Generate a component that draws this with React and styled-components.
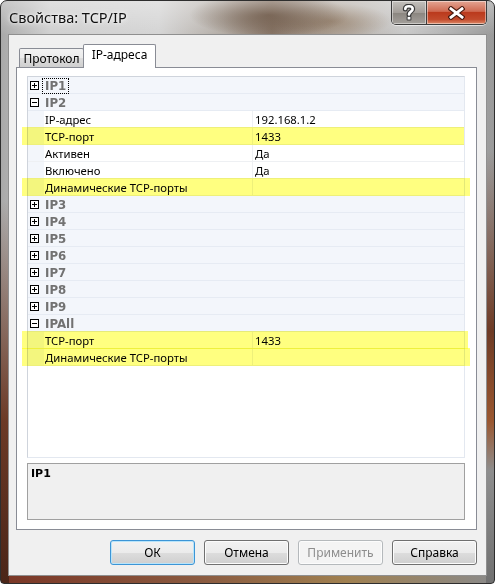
import React from "react";
import styled, { createGlobalStyle } from "styled-components";

const GlobalStyle = createGlobalStyle`
  html, body {
    margin: 0;
    padding: 0;
    background: #ffffff;
  }
  body {
    width: 495px;
    height: 584px;
    overflow: hidden;
    font-family: "Noto Sans", "DejaVu Sans", sans-serif;
  }
`;

const rows = [
  { kind: "cat", label: "IP1", open: false, focus: true },
  { kind: "cat", label: "IP2", open: true },
  { kind: "prop", name: "IP-адрес", value: "192.168.1.2" },
  { kind: "prop", name: "TCP-порт", value: "1433", mark: 0 },
  { kind: "prop", name: "Активен", value: "Да" },
  { kind: "prop", name: "Включено", value: "Да" },
  { kind: "prop", name: "Динамические TCP-порты", value: "", mark: 6 },
  { kind: "cat", label: "IP3" },
  { kind: "cat", label: "IP4" },
  { kind: "cat", label: "IP5" },
  { kind: "cat", label: "IP6" },
  { kind: "cat", label: "IP7" },
  { kind: "cat", label: "IP8" },
  { kind: "cat", label: "IP9" },
  { kind: "cat", label: "IPAll", open: true },
  { kind: "prop", name: "TCP-порт", value: "1433", mark: 4 },
  { kind: "prop", name: "Динамические TCP-порты", value: "", mark: 6 },
];

function Expander({ open }) {
  return (
    <svg width="9" height="9" viewBox="0 0 9 9">
      <rect x="0.5" y="0.5" width="8" height="8" fill="#ffffff" stroke="#000000" />
      <line x1="2" y1="4.5" x2="7" y2="4.5" stroke="#000000" />
      {!open && <line x1="4.5" y1="2" x2="4.5" y2="7" stroke="#000000" />}
    </svg>
  );
}

function HelpGlyph() {
  return (
    <svg width="14" height="17" viewBox="0 0 14 17">
      <g fill="none" strokeLinecap="round" strokeLinejoin="round">
        <path d="M3.3 5 C3.3 1.3 10.7 1.3 10.7 5 C10.7 7.6 7 7.6 7 10.4" stroke="#3a3a3a" strokeWidth="5" />
        <path d="M3.3 5 C3.3 1.3 10.7 1.3 10.7 5 C10.7 7.6 7 7.6 7 10.4" stroke="#ffffff" strokeWidth="2.6" />
      </g>
      <rect x="4.6" y="12" width="4.8" height="4.4" rx="1" fill="#3a3a3a" />
      <rect x="5.6" y="12.9" width="2.8" height="2.6" fill="#ffffff" />
    </svg>
  );
}

function CloseGlyph() {
  return (
    <svg width="17" height="14" viewBox="0 0 17 14">
      <g strokeLinecap="square">
        <path d="M3 2.8 L14 11.2 M14 2.8 L3 11.2" stroke="#4a1a10" strokeWidth="5" />
        <path d="M3 2.8 L14 11.2 M14 2.8 L3 11.2" stroke="#ffffff" strokeWidth="2.8" />
      </g>
    </svg>
  );
}

function PropertyRow({ row }) {
  if (row.kind === "cat") {
    return (
      <Row $category>
        <Margin>
          <Expander open={row.open} />
        </Margin>
        <CategoryLabel $focus={row.focus}>{row.label}</CategoryLabel>
      </Row>
    );
  }
  return (
    <Row>
      <Margin />
      <NameCell>{row.name}</NameCell>
      <ValueCell>{row.value}</ValueCell>
      {row.mark !== undefined && <Marker $reach={row.mark} />}
    </Row>
  );
}

export default function App() {
  return (
    <>
      <GlobalStyle />
      <Window>
        <TitleBar>
          <Title>Свойства: TCP/IP</Title>
          <Caption>
            <HelpButton>
              <HelpGlyph />
            </HelpButton>
            <CloseButton>
              <CloseGlyph />
            </CloseButton>
          </Caption>
        </TitleBar>
        <Client>
          <TabStrip>
            <Tab>Протокол</Tab>
            <Tab $active>IP-адреса</Tab>
          </TabStrip>
          <TabPanel>
            <Grid>
              {rows.map((row, i) => (
                <PropertyRow key={i} row={row} />
              ))}
            </Grid>
            <Description>
              <strong>IP1</strong>
            </Description>
          </TabPanel>
          <ButtonRow>
            <Button $primary>ОК</Button>
            <Button>Отмена</Button>
            <Button disabled>Применить</Button>
            <Button>Справка</Button>
          </ButtonRow>
        </Client>
      </Window>
    </>
  );
}

const Window = styled.div`
  width: 495px;
  height: 584px;
  box-sizing: border-box;
  display: flex;
  flex-direction: column;
  padding: 0 7px 7px;
  border: 1px solid #2e2e2e;
  border-radius: 7px 7px 4px 4px;
  overflow: hidden;
  background:
    linear-gradient(to bottom, rgba(255, 255, 255, 0.35), rgba(255, 255, 255, 0) 34px),
    radial-gradient(ellipse 80px 22px at 268px 14px, rgba(80, 55, 35, 0.85), rgba(80, 55, 35, 0) 100%),
    radial-gradient(ellipse 60px 18px at 330px 20px, rgba(120, 90, 60, 0.6), rgba(120, 90, 60, 0) 100%),
    linear-gradient(to bottom, rgba(0, 0, 0, 0) 200px, #6c3a26 420px, #4a2518 584px) left top / 8px 100% no-repeat,
    linear-gradient(to bottom, rgba(0, 0, 0, 0) 150px, #6e3b25 330px, #9a5730 420px, #8e8e8e 470px, #707070 584px) right top / 8px 100% no-repeat,
    linear-gradient(to right, #7a3626, #8a5a40 40%, #a08050 70%, #8a8a8a) left bottom / 100% 8px no-repeat,
    linear-gradient(to right, #a9a9a9, #cfcfcf 10%, #d4d4d4 32%, #b3aca5 45%, #8c7a6c 55%, #b6aea6 68%, #c8c8c8 82%, #9a9a9a 100%);
`;

const TitleBar = styled.div`
  height: 33px;
  display: flex;
  align-items: flex-start;
  flex-shrink: 0;
`;

const Title = styled.div`
  padding: 6px 0 0 1px;
  font-size: 14.5px;
  color: #101010;
  text-shadow: 0 0 6px rgba(255, 255, 255, 0.9), 0 0 3px rgba(255, 255, 255, 0.9);
`;

const Caption = styled.div`
  margin-left: auto;
  display: flex;
  border: 1px solid #3c3c3c;
  border-top: none;
  border-radius: 0 0 5px 5px;
  overflow: hidden;
  box-shadow: 0 1px 0 rgba(255, 255, 255, 0.6);
`;

const CaptionButton = styled.div`
  height: 23px;
  display: flex;
  align-items: center;
  justify-content: center;
  box-shadow: inset 0 0 0 1px rgba(255, 255, 255, 0.45);
`;

const HelpButton = styled(CaptionButton)`
  width: 34px;
  border-right: 1px solid #3c3c3c;
  background: linear-gradient(to bottom, #c4c1bd, #a29d98 50%, #8a857f 51%, #a4a09b);
`;

const CloseButton = styled(CaptionButton)`
  width: 59px;
  background: linear-gradient(to bottom, #e4a593, #cf6a52 45%, #bb3a1d 50%, #c24a2c 80%, #de8a68);
`;

const Client = styled.div`
  flex: 1;
  display: flex;
  flex-direction: column;
  min-height: 0;
  padding: 9px 9px 10px 7px;
  background: #f0f0f0;
  border: 1px solid #8f8f8f;
  font-size: 12px;
  color: #000000;
`;

const TabStrip = styled.div`
  height: 23px;
  display: flex;
  align-items: flex-end;
  padding-left: 3px;
  position: relative;
  z-index: 1;
  flex-shrink: 0;
`;

const Tab = styled.div`
  box-sizing: border-box;
  height: ${(p) => (p.$active ? "24px" : "19px")};
  width: ${(p) => (p.$active ? "73px" : "65px")};
  margin-left: ${(p) => (p.$active ? "-1px" : "0")};
  margin-bottom: ${(p) => (p.$active ? "-1px" : "0")};
  border: 1px solid #898c95;
  border-bottom: none;
  border-radius: 2px 2px 0 0;
  display: flex;
  align-items: center;
  justify-content: center;
  padding-bottom: ${(p) => (p.$active ? "4px" : "0")};
  background: ${(p) =>
    p.$active ? "#ffffff" : "linear-gradient(to bottom, #f2f2f2, #ebebeb 50%, #dddddd 51%, #cfcfcf)"};
  color: #000000;
`;

const TabPanel = styled.div`
  flex: 1;
  min-height: 0;
  display: flex;
  flex-direction: column;
  gap: 5px;
  padding: 8px 11px 9px 10px;
  background: #ffffff;
  border: 1px solid #898c95;
`;

const Grid = styled.div`
  flex: 1;
  display: flex;
  flex-direction: column;
  border: 1px solid #cfd4dc;
  border-right-color: #e3e8f0;
  border-bottom-color: #e3e8f0;
  background: #ffffff;
  font-size: 11.3px;
`;

const Row = styled.div`
  position: relative;
  height: 16px;
  display: grid;
  grid-template-columns: 16px 209px 1fr;
  align-items: stretch;
  border-bottom: 1px solid ${(p) => (p.$category ? "#e6ebf3" : "#eef0f3")};
  background: ${(p) => (p.$category ? "#f3f6fb" : "#ffffff")};
  line-height: 17px;
  white-space: nowrap;
`;

const Margin = styled.div`
  display: flex;
  align-items: center;
  padding-left: 2px;
  background: #f3f6fb;
`;

const CategoryLabel = styled.span`
  grid-column: 2 / 4;
  justify-self: start;
  margin-left: -1px;
  padding: 0 2px;
  line-height: 14px;
  align-self: center;
  margin-top: 1px;
  font-family: "DejaVu Sans", sans-serif;
  font-size: 11.8px;
  font-weight: bold;
  color: #727272;
  outline: ${(p) => (p.$focus ? "1px dotted #000000" : "none")};
`;

const NameCell = styled.div`
  padding-left: 1px;
  border-right: 1px solid #eef0f3;
  overflow: hidden;
`;

const ValueCell = styled.div`
  padding-left: 2px;
  overflow: hidden;
`;

const Marker = styled.div`
  position: absolute;
  top: -1px;
  bottom: -1px;
  left: -6px;
  right: ${(p) => -p.$reach}px;
  background: #ffff80;
  mix-blend-mode: multiply;
  pointer-events: none;
`;

const Description = styled.div`
  height: 57px;
  box-sizing: border-box;
  flex-shrink: 0;
  padding: 3px 3px;
  background: #f0f0f0;
  border: 1px solid #a0a0a0;
  font-family: "DejaVu Sans", sans-serif;
  font-size: 11px;
  color: #000000;
`;

const ButtonRow = styled.div`
  display: flex;
  justify-content: flex-end;
  gap: 9px;
  margin-top: 10px;
  flex-shrink: 0;
`;

const Button = styled.button`
  width: 85px;
  height: 25px;
  box-sizing: border-box;
  padding: 0;
  font-family: inherit;
  font-size: 12px;
  color: ${(p) => (p.disabled ? "#8d8d8d" : "#000000")};
  border: 1px solid ${(p) => (p.$primary ? "#3c95d6" : p.disabled ? "#b5b9bc" : "#707070")};
  border-radius: 3px;
  box-shadow: inset 0 0 0 1px ${(p) => (p.$primary ? "#b8e4fa" : "#fcfcfc")};
  background: ${(p) =>
    p.disabled
      ? "#f4f4f4"
      : "linear-gradient(to bottom, #f2f2f2, #ebebeb 50%, #dddddd 51%, #cfcfcf)"};
`;
